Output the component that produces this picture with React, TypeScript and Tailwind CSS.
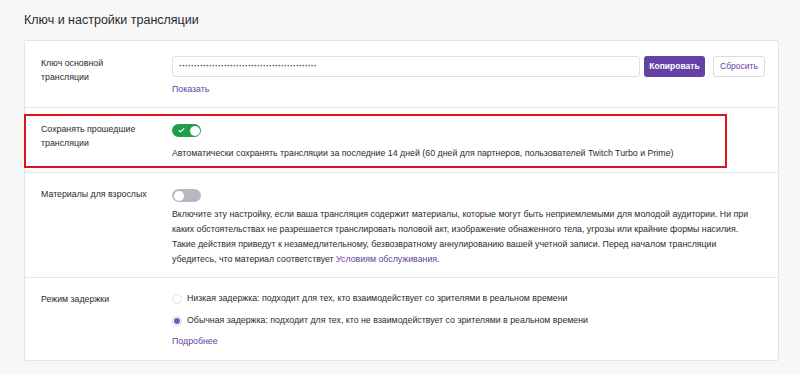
import { Check } from "lucide-react";

function Toggle({ on }: { on: boolean }) {
  return (
    <div
      className={`w-[29px] h-[13px] rounded-full flex items-center px-[1.5px] ${
        on ? "bg-[#1f9d4c] justify-end" : "bg-[#b9b7c1] justify-start"
      }`}
    >
      {on && <Check className="w-[7px] h-[7px] text-white mr-[5px]" strokeWidth={4} />}
      <div className="w-[10px] h-[10px] rounded-full bg-white" />
    </div>
  );
}

function Radio({ checked }: { checked: boolean }) {
  return (
    <div
      className={`w-[10px] h-[10px] rounded-full border flex items-center justify-center ${
        checked ? "border-[#d9cfee]" : "border-[#e2e0e8]"
      }`}
    >
      {checked && <div className="w-[6px] h-[6px] rounded-full bg-[#7b55b8]" />}
    </div>
  );
}

const label = "w-[131px] shrink-0 text-[8.8px] leading-[14px] text-[#2b2b2e]";

export default function App() {
  return (
    <div
      className="w-[800px] h-[374px] bg-[#f7f7f8] px-6 pt-[12px] text-[#2b2b2e]"
      style={{ fontFamily: '"Liberation Sans", Arial, sans-serif' }}
    >
      <h1 className="text-[12.5px] leading-[16px] text-[#2a2a2d]">Ключ и настройки трансляции</h1>
      <div className="relative mt-[12px] w-[755px] bg-white border border-[#e4e4e7] rounded-[2px]">
        {/* stream key */}
        <div className="flex px-4 pt-[15px] pb-[11px] border-b border-[#e8e8ea]">
          <div className={label}>
            Ключ основной<br />трансляции
          </div>
          <div className="flex-1">
            <div className="flex items-center">
              <div className="w-[468px] h-[21px] border border-[#dedee3] rounded-[3px] flex items-center px-[6px] text-[9px] font-bold tracking-[0px] text-[#444] overflow-hidden whitespace-nowrap">
                ··············································
              </div>
              <button className="ml-[4px] h-[21px] w-[61px] rounded-[3px] bg-[#6441a4] text-white text-[8.5px] font-bold">
                Копировать
              </button>
              <button className="ml-[8px] h-[21px] w-[52px] rounded-[3px] border border-[#dcdae3] bg-white text-[#6441a4] text-[8.5px]">
                Сбросить
              </button>
            </div>
            <div className="mt-[5px] text-[8.8px] leading-[14px] text-[#6441a4]">Показать</div>
          </div>
        </div>
        {/* save past broadcasts */}
        <div className="flex px-4 pt-[14px] pb-[12px] border-b border-[#e8e8ea]">
          <div className={label}>
            Сохранять прошедшие<br />трансляции
          </div>
          <div className="flex-1">
            <div className="pt-[2px]">
              <Toggle on />
            </div>
            <div className="mt-[9px] text-[8.8px] leading-[14px]">
              Автоматически сохранять трансляции за последние 14 дней (60 дней для партнеров, пользователей Twitch Turbo и Prime)
            </div>
          </div>
        </div>
        {/* mature content */}
        <div className="flex px-4 pt-[12px] pb-[10px] border-b border-[#e8e8ea]">
          <div className={`${label} pt-[2px]`}>Материалы для взрослых</div>
          <div className="flex-1">
            <div className="pt-[4px]">
              <Toggle on={false} />
            </div>
            <p className="mt-[5px] text-[8.8px] leading-[15px] whitespace-nowrap">
              Включите эту настройку, если ваша трансляция содержит материалы, которые могут быть неприемлемыми для молодой аудитории. Ни при
              <br />
              каких обстоятельствах не разрешается транслировать половой акт, изображение обнаженного тела, угрозы или крайние формы насилия.
              <br />
              Такие действия приведут к незамедлительному, безвозвратному аннулированию вашей учетной записи. Перед началом трансляции
              <br />
              убедитесь, что материал соответствует <span className="text-[#6441a4]">Условиям обслуживания</span>.
            </p>
          </div>
        </div>
        {/* latency */}
        <div className="flex px-4 pt-[14px] pb-[12px]">
          <div className={label}>Режим задержки</div>
          <div className="flex-1">
            <div className="flex items-center gap-[5px] h-[14px] text-[8.8px]">
              <Radio checked={false} />
              <span>Низкая задержка: подходит для тех, кто взаимодействует со зрителями в реальном времени</span>
            </div>
            <div className="flex items-center gap-[5px] h-[14px] mt-[8px] text-[8.8px]">
              <Radio checked />
              <span>Обычная задержка: подходит для тех, кто не взаимодействует со зрителями в реальном времени</span>
            </div>
            <div className="mt-[6px] text-[8.8px] leading-[14px] text-[#6441a4]">Подробнее</div>
          </div>
        </div>
        <div className="absolute left-[-1px] top-[73px] w-[703px] h-[54px] border-2 border-[#e0121c] pointer-events-none" />
      </div>
    </div>
  );
}
